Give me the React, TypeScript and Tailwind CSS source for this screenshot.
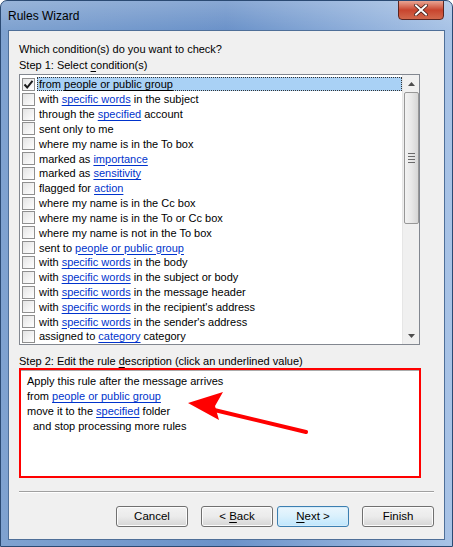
import React from 'react';

type Part = { t: string; link?: boolean };

const conditions: Part[][] = [
  [{ t: 'from ' }, { t: 'people or public group', link: true }],
  [{ t: 'with ' }, { t: 'specific words', link: true }, { t: ' in the subject' }],
  [{ t: 'through the ' }, { t: 'specified', link: true }, { t: ' account' }],
  [{ t: 'sent only to me' }],
  [{ t: 'where my name is in the To box' }],
  [{ t: 'marked as ' }, { t: 'importance', link: true }],
  [{ t: 'marked as ' }, { t: 'sensitivity', link: true }],
  [{ t: 'flagged for ' }, { t: 'action', link: true }],
  [{ t: 'where my name is in the Cc box' }],
  [{ t: 'where my name is in the To or Cc box' }],
  [{ t: 'where my name is not in the To box' }],
  [{ t: 'sent to ' }, { t: 'people or public group', link: true }],
  [{ t: 'with ' }, { t: 'specific words', link: true }, { t: ' in the body' }],
  [{ t: 'with ' }, { t: 'specific words', link: true }, { t: ' in the subject or body' }],
  [{ t: 'with ' }, { t: 'specific words', link: true }, { t: ' in the message header' }],
  [{ t: 'with ' }, { t: 'specific words', link: true }, { t: " in the recipient's address" }],
  [{ t: 'with ' }, { t: 'specific words', link: true }, { t: " in the sender's address" }],
  [{ t: 'assigned to ' }, { t: 'category', link: true }, { t: ' category' }],
];

const Link = ({ children }: { children: React.ReactNode }) => (
  <span className="text-[#0033cc] underline underline-offset-2">{children}</span>
);

const Checkbox = ({ checked }: { checked?: boolean }) => (
  <div className="w-[13px] h-[13px] border border-[#8f8f8f] bg-gradient-to-br from-[#e4e4e4] to-[#ffffff] flex items-center justify-center shrink-0">
    {checked && (
      <svg width="11" height="11" viewBox="0 0 11 11">
        <path d="M1.5 5.5 L4.2 8.5 L9.5 1.8" fill="none" stroke="#1b1b1b" strokeWidth="2" />
      </svg>
    )}
  </div>
);

const Button = ({ children, focused }: { children: React.ReactNode; focused?: boolean }) => (
  <button
    className={
      focused
        ? 'w-[72px] h-[21px] rounded-[3px] border border-[#3c7fb1] bg-gradient-to-b from-[#eaf6fd] via-[#d9f0fc] to-[#bee6fd] text-[11.5px] text-black shadow-[inset_0_0_0_1px_#d6ecf9]'
        : 'w-[72px] h-[21px] rounded-[3px] border border-[#707070] bg-gradient-to-b from-[#f2f2f2] via-[#ebebeb] to-[#d5d5d5] text-[11.5px] text-black shadow-[inset_0_0_0_1px_#fcfcfc]'
    }
  >
    {children}
  </button>
);

export default function App() {
  return (
    <div
      className="w-[453px] h-[547px] rounded-t-[7px] border border-[#2b4a73] bg-gradient-to-r from-[#7fa2d0] via-[#6b92c9] to-[#a8c3e6] flex flex-col overflow-hidden"
      style={{ fontFamily: '"Liberation Sans", Arial, sans-serif' }}
    >
      {/* title bar */}
      <div className="h-[29px] flex items-start relative bg-gradient-to-b from-[#ffffff33] to-transparent">
        <div className="pl-[7px] pt-[6px] text-[12px] text-black">Rules Wizard</div>
        <div className="absolute left-[397px] top-[-1px] w-[46px] h-[20px] rounded-b-[4px] border border-[#5b2520] bg-gradient-to-b from-[#e8a493] via-[#c8442e] to-[#d2684c] flex items-center justify-center">
          <svg width="14" height="12" viewBox="0 0 14 12">
            <path d="M2 1.5 L12 10.5 M12 1.5 L2 10.5" stroke="#3a1a16" strokeWidth="3.6" strokeLinecap="square" />
            <path d="M2 1.5 L12 10.5 M12 1.5 L2 10.5" stroke="#ffffff" strokeWidth="2" strokeLinecap="square" />
          </svg>
        </div>
      </div>

      {/* client area */}
      <div className="ml-[7px] mr-[7px] h-[510px] border border-[#4f6f98] bg-[#f0f0f0] flex flex-col text-[11px] text-black pl-[10px] pr-[10px]">
        <div className="h-[16px] mt-[10px] leading-[16px]">Which condition(s) do you want to check?</div>
        <div className="h-[17px] leading-[16px]">
          Step 1: Select <span className="underline underline-offset-2">c</span>ondition(s)
        </div>

        {/* condition list */}
        <div className="w-[401px] h-[271px] border border-[#828790] bg-white flex">
          <div className="flex-1 pt-[2px] flex flex-col">
            {conditions.map((row, i) => (
              <div key={i} className="h-[15px] flex items-center pl-[2px]">
                <Checkbox checked={i === 0} />
                <div
                  className={
                    i === 0
                      ? 'ml-[2px] flex-1 h-[14px] leading-[12px] pl-[1px] bg-[#a9d1f5] border border-dotted border-[#333]'
                      : 'ml-[3px] flex-1 h-[14px] leading-[14px] pl-[1px] whitespace-nowrap'
                  }
                >
                  {row.map((p, j) =>
                    p.link ? (
                      i === 0 ? (
                        <span key={j} className="underline underline-offset-2">{p.t}</span>
                      ) : (
                        <Link key={j}>{p.t}</Link>
                      )
                    ) : (
                      <span key={j} className="whitespace-pre">{p.t}</span>
                    )
                  )}
                </div>
              </div>
            ))}
          </div>

          {/* scrollbar */}
          <div className="w-[17px] bg-[#f0f0f0] border-l border-[#e6e6e6] flex flex-col items-center">
            <div className="h-[17px] flex items-center justify-center">
              <svg width="7" height="4" viewBox="0 0 7 4">
                <path d="M3.5 0 L7 4 L0 4 Z" fill="#4d4d4d" />
              </svg>
            </div>
            <div className="w-[15px] h-[132px] rounded-[2px] border border-[#979797] bg-gradient-to-r from-[#f2f2f2] via-[#e8e8e8] to-[#d6d6d6] flex flex-col items-center justify-center gap-[2px]">
              <div className="w-[7px] h-[1px] bg-[#6a6a6a]" />
              <div className="w-[7px] h-[1px] bg-[#6a6a6a]" />
              <div className="w-[7px] h-[1px] bg-[#6a6a6a]" />
              <div className="w-[7px] h-[1px] bg-[#6a6a6a]" />
            </div>
            <div className="flex-1" />
            <div className="h-[17px] flex items-center justify-center">
              <svg width="7" height="4" viewBox="0 0 7 4">
                <path d="M0 0 L7 0 L3.5 4 Z" fill="#4d4d4d" />
              </svg>
            </div>
          </div>
        </div>

        <div className="h-[16px] mt-[8px] leading-[16px]">
          Step 2: Edit the rule <span className="underline underline-offset-2">d</span>escription (click an underlined value)
        </div>

        {/* description box */}
        <div className="relative w-[402px] h-[110px] mt-[-1px] border-2 border-[#ff0000] bg-white">
          <div className="border-t border-[#ababab] pl-[6px] pt-[3px] leading-[15px]">
            <div>Apply this rule after the message arrives</div>
            <div>
              from <Link>people or public group</Link>
            </div>
            <div>
              move it to the <Link>specified</Link> folder
            </div>
            <div className="pl-[6px]">and stop processing more rules</div>
          </div>
          <svg className="absolute left-0 top-0" width="402" height="110" viewBox="0 0 402 110">
            <path d="M285 62 L185 38" stroke="#ff0000" strokeWidth="4" strokeLinecap="round" />
            <path d="M167 33 L202 22 L194 36 L198 50 Z" fill="#ff0000" />
          </svg>
        </div>

        <div className="mt-[13px] w-[415px] h-[2px] border-t border-[#a0a0a0] border-b border-b-white" />

        <div className="mt-[13px] flex pl-[97px]">
          <Button>Cancel</Button>
          <div className="w-[13px]" />
          <Button>
            &lt; <span className="underline underline-offset-2">B</span>ack
          </Button>
          <div className="w-[4px]" />
          <Button focused>
            <span className="underline underline-offset-2">N</span>ext &gt;
          </Button>
          <div className="w-[13px]" />
          <Button>Finish</Button>
        </div>
      </div>
    </div>
  );
}
